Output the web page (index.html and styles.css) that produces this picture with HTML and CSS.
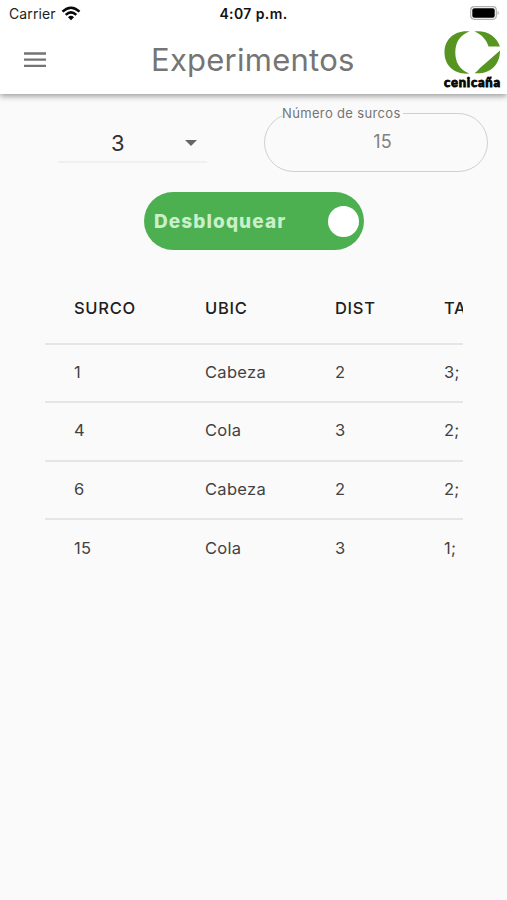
FILE: index.html
```html
<!DOCTYPE html>
<html lang="es">
<head>
<meta charset="utf-8">
<title>Experimentos</title>
<link rel="stylesheet" href="styles.css">
</head>
<body>
<header class="top">
  <div class="status">
    <div class="carrier"><span>Carrier</span>
      <svg width="20" height="16" viewBox="0 0 20 16"><g fill="none" stroke="#080808" stroke-width="2.500"><path d="M1.500 5.700Q10-2.300 18.500 5.700"/><path d="M4.700 8.800Q10 3.900 15.300 8.800"/></g><path d="M7 11.200Q10 8.500 13 11.200L10 14.200Z" fill="#080808"/></svg>
    </div>
    <div class="time">4:07 p.m.</div>
    <svg class="battery" width="30" height="14" viewBox="0 0 30 14"><rect x=".7" y=".7" width="25.600" height="12.600" rx="3.500" fill="#fff" stroke="#b0b0b0" stroke-width="1.200"/><rect x="2.300" y="2.300" width="22.400" height="9.400" rx="2" fill="#000"/><path d="M27.600 4.800Q30 7 27.600 9.200Z" fill="#a8a8a8"/></svg>
  </div>
  <div class="bar">
    <svg class="menu" width="22" height="16" viewBox="0 0 22 16"><path d="M0 1.500H22M0 7.700H22M0 13.900H22" stroke="#747474" stroke-width="2.300"/></svg>
    <h1>Experimentos</h1>
    <div class="brand">
      <svg width="57" height="43" viewBox="0 0 57 43"><path fill="#579522" d="M25.500 .5C11-1 .5 8 .5 21.500S11 44 25.500 42.500C15.500 39 11.300 31 11.300 21.500S15.500 4 25.500 .5ZM30.500.5C43-.8 52 5 56 15.500H44.500C42.500 9 38 3.500 30.500.5ZM56 19.500C56 34 46 43.500 30.500 42.200Q33.500 40 36 37Z"/></svg>
      <span>cenicaña</span>
    </div>
  </div>
</header>
<main>
  <div class="controls">
    <div class="select"><span>3</span><svg width="12" height="6" viewBox="0 0 12 6"><path d="M0 0H12L6 6Z" fill="#666"/></svg></div>
    <fieldset class="field"><legend>Número de surcos</legend><span>15</span></fieldset>
  </div>
  <div class="toggle"><span>Desbloquear</span><i class="knob"></i></div>
  <div class="scroll">
    <table>
      <thead><tr><th>SURCO</th><th>UBIC</th><th>DIST</th><th>TA</th></tr></thead>
      <tbody>
        <tr><td>1</td><td>Cabeza</td><td>2</td><td>3;</td></tr>
        <tr><td>4</td><td>Cola</td><td>3</td><td>2;</td></tr>
        <tr><td>6</td><td>Cabeza</td><td>2</td><td>2;</td></tr>
        <tr><td>15</td><td>Cola</td><td>3</td><td>1;</td></tr>
      </tbody>
    </table>
  </div>
</main>
</body>
</html>
```
FILE: styles.css
```css
* { box-sizing: border-box; }
body { margin: 0; height: 900px; overflow: hidden; background: #fafafa; color: #424242; font-family: Inter, "Liberation Sans", sans-serif; }
svg { display: block; flex: none; }
.top { position: relative; height: 94px; background: #fff; box-shadow: 0 2px 6px rgba(0,0,0,.4); }
.status { display: grid; grid-template-columns: 1fr auto 1fr; height: 27px; align-items: center; padding: 0 7px 0 9px; color: #222; }
.carrier { display: flex; align-items: center; gap: 6px; font-size: 14px; letter-spacing: .1px; }
.carrier svg { margin-left: -1px; }
.time { margin-left: -2px; font-size: 14px; font-weight: 600; color: #111; letter-spacing: .4px; }
.battery { justify-self: end; margin-top: -1px; }
.bar { display: flex; height: 67px; padding: 0 6px 0 24px; }
.menu { margin-top: 25px; }
h1 { margin: 12px 0 0 105px; width: 205px; font-size: 31px; line-height: 42px; font-weight: 400; letter-spacing: .25px; color: #757575; white-space: nowrap; }
.brand { margin: 4px 0 0 auto; width: 57px; }
.brand span { display: block; width: 57px; margin: 1px 0 0; font: 900 13px/15px Lato, sans-serif; letter-spacing: .75px; color: #050505; white-space: nowrap; -webkit-text-stroke: .8px #050505; }
.controls { display: flex; padding: 11px 19px 0 58px; justify-content: space-between; }
.select { display: flex; width: 149px; height: 46px; margin-top: 12px; padding: 8px 10px 0 53px; justify-content: space-between; align-items: center; border-bottom: 2px solid #f0f0f0; font-size: 22px; color: #303030; }
.field { width: 224px; height: 67px; margin: 0; padding: 0 0 0 13px; border: 1.500px solid #cfcfcf; border-radius: 30px; color: #808080; text-align: center; font-size: 18px; line-height: 22px; }
.field legend { margin-left: 4px; padding: 0 2px 0 0; font-size: 13px; line-height: 16px; letter-spacing: .35px; color: #747474; text-align: left; margin-right: auto; }
.field span { display: block; margin-top: 10px; }
.toggle { display: flex; align-items: center; justify-content: space-between; width: 220px; height: 58px; margin: 20px 0 0 144px; padding: 0 5px 0 10px; border-radius: 29px; background: #4caf50; color: #c9f0ca; font-size: 19px; font-weight: 800; letter-spacing: 1.100px; }
.knob { width: 31px; height: 31px; border-radius: 50%; background: #fff; }
.scroll { width: 418px; margin: 24px 0 0 45px; overflow: hidden; }
table { width: 419px; table-layout: fixed; border-collapse: separate; border-spacing: 0; text-align: left; white-space: nowrap; font-size: 16.500px; letter-spacing: .3px; }
th { height: 68.500px; padding: 0; font-weight: 500; color: #202020; letter-spacing: .7px; }
td { height: 58.600px; padding: 0 0 2px; border-top: 2px solid #e5e5e5; }
th:first-child, td:first-child { width: 160px; padding-left: 29px; }
th:nth-child(2) { width: 130px; }
th:nth-child(3) { width: 109px; }
```
